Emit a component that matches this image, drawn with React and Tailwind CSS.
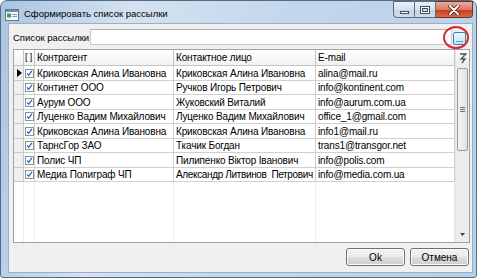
import React from "react";

const rows = [
  ["Криковская Алина Ивановна", "Криковская Алина Ивановна", "alina@mail.ru"],
  ["Континет ООО", "Ручков Игорь Петрович", "info@kontinent.com"],
  ["Аурум ООО", "Жуковский Виталий", "info@aurum.com.ua"],
  ["Луценко Вадим Михайлович", "Луценко Вадим Михайлович", "office_1@gmail.com"],
  ["Криковская Алина Ивановна", "Криковская Алина Ивановна", "info1@mail.ru"],
  ["ТарнсГор ЗАО", "Ткачик Богдан", "trans1@transgor.net"],
  ["Полис ЧП", "Пилипенко Віктор Іванович", "info@polis.com"],
  ["Медиа Полиграф ЧП", "Александр Литвинов  Петрович", "info@media.com.ua"],
];
const heights = ["h-[15px]", "h-[14px]"];

function Check() {
  return (
    <div className="w-[9px] h-[9px] bg-white border border-[#8e8f8f] flex items-center justify-center">
      <svg width="9" height="9" viewBox="0 0 9 9">
        <path d="M1.5 4.5 L3.5 6.8 L7.6 1.2" fill="none" stroke="#2a5bb8" strokeWidth="1.6" />
      </svg>
    </div>
  );
}

function Btn({ children }) {
  return (
    <div className="w-[59px] h-[18px] rounded-[3px] border border-[#707070] bg-[linear-gradient(#f2f2f2_0%,#ebebeb_50%,#dddddd_51%,#cfcfcf_100%)] flex items-center justify-center text-[10px] text-black shadow-[inset_0_0_0_1px_#fcfcfc]">
      {children}
    </div>
  );
}

export default function App() {
  return (
    <div className="w-[480px] h-[280px] bg-white relative overflow-hidden" style={{ fontFamily: '"Liberation Sans", Arial, sans-serif' }}>
      <div className="w-[477px] h-[278px] rounded-t-[7px] rounded-b-[3px] border border-[#566a80] bg-[linear-gradient(100deg,#a9c4e2_0%,#d4e2f1_25%,#c3d7ec_55%,#b8cfe8_100%)] flex flex-col">
        {/* title bar */}
        <div className="h-[22px] flex items-start">
          <div className="flex items-center h-[22px] pl-[4px] pt-[5px]">
            <svg width="14" height="12" viewBox="0 0 14 12">
              <rect x="0.5" y="0.5" width="13" height="11" fill="#f4f7fb" stroke="#5d7895" />
              <rect x="1" y="1" width="12" height="2" fill="#6d8fb7" />
              <rect x="2" y="4.5" width="4" height="4" fill="#3aa53a" />
              <rect x="7" y="5" width="5" height="1" fill="#8aa0b8" />
              <rect x="7" y="7" width="5" height="1" fill="#8aa0b8" />
            </svg>
            <span className="ml-[5px] text-[9.5px] text-black whitespace-nowrap">Сформировать список рассылки</span>
          </div>
          <div className="ml-auto flex mr-[3px]">
            <div className="w-[22px] h-[17px] rounded-bl-[4px] border border-[#5b6c80] bg-[linear-gradient(#e9f0f8_0%,#d6e2ef_50%,#c2d3e6_51%,#cfdcec_100%)] flex items-center justify-center">
              <div className="w-[9px] h-[3px] bg-white border border-[#404c5a] mt-[5px]"></div>
            </div>
            <div className="w-[21px] h-[17px] border-y border-r border-[#5b6c80] bg-[linear-gradient(#e9f0f8_0%,#d6e2ef_50%,#c2d3e6_51%,#cfdcec_100%)] flex items-center justify-center">
              <div className="w-[10px] h-[8px] border border-[#404c5a] bg-white flex items-center justify-center">
                <div className="w-[6px] h-[4px] border border-[#404c5a] bg-[#cfdcec]"></div>
              </div>
            </div>
            <div className="w-[37px] h-[17px] rounded-br-[4px] border-y border-r border-[#6b3328] bg-[linear-gradient(#ebab9c_0%,#d97a63_50%,#c33b1d_51%,#d86a4a_100%)] flex items-center justify-center">
              <svg width="12" height="10" viewBox="0 0 12 10">
                <path d="M2 1 L10 9 M10 1 L2 9" stroke="#3b1a14" strokeWidth="3.4" strokeLinecap="round" />
                <path d="M2 1 L10 9 M10 1 L2 9" stroke="#ffffff" strokeWidth="2" strokeLinecap="round" />
              </svg>
            </div>
          </div>
        </div>
        {/* client */}
        <div className="ml-[7px] mr-[3px] h-[250px] bg-[#f0f0f0] border border-[#9aaec4] relative pl-[4px] pr-[2px] flex flex-col">
          <div className="mt-[5px] h-[16px] flex items-center">
            <span className="w-[77px] text-[9.5px] leading-[16px] pt-[1px] text-black whitespace-nowrap">Список рассылки</span>
            <div className="flex-1 h-[16px] bg-white border border-[#c5ccd5] border-t-[#abadb3]"></div>
            <div className="ml-[1px] w-[13px] h-[13px] mt-[3px] mr-[4px] rounded-[2px] border border-[#3c7fb1] bg-[linear-gradient(#eaf6fd,#bee6fd)] flex items-end justify-center">
              <span className="text-[9px] leading-[9px] text-black">...</span>
            </div>
          </div>
          <div className="absolute left-[434px] top-[2px] w-[26px] h-[23px] rounded-[50%] border-2 border-[#d8282c]"></div>
          {/* grid */}
          <div className="mt-[4px] h-[194px] bg-white border border-[#a0a0a0] flex">
            <div className="w-[441px] flex flex-col">
              <div className="h-[16px] flex text-[10px] tracking-[-0.15px] text-black bg-[linear-gradient(#ffffff,#f0f0f0)]">
                <div className="w-[10px] border-r border-b border-[#c5c5c5]"></div>
                <div className="w-[11px] border-r border-b border-[#c5c5c5] text-[9px] leading-[15px] pl-[1px] whitespace-pre">[ ]</div>
                <div className="w-[139px] border-r border-b border-[#c5c5c5] leading-[15px] pl-[2px]">Контрагент</div>
                <div className="w-[142px] border-r border-b border-[#c5c5c5] leading-[15px] pl-[2px]">Контактное лицо</div>
                <div className="w-[139px] border-r border-b border-[#c5c5c5] leading-[15px] pl-[2px]">E-mail</div>
              </div>
              {rows.map((r, i) => (
                <div key={i} className={"flex text-[10px] tracking-[-0.15px] text-black " + heights[i % 2]}>
                  <div className="w-[10px] bg-[#f0f0f0] border-r border-b border-[#c8c8c8] flex items-center justify-end pr-[1px]">
                    {i === 0 && (
                      <svg width="5" height="8" viewBox="0 0 5 8"><path d="M0 0 L5 4 L0 8 Z" fill="#000" /></svg>
                    )}
                  </div>
                  <div className="w-[11px] border-r border-b border-[#d0d0d0] flex items-center pl-[1px]">
                    <Check />
                  </div>
                  <div className="w-[139px] border-r border-b border-[#d0d0d0] flex items-center pl-[2px] whitespace-pre overflow-hidden">{r[0]}</div>
                  <div className={"w-[142px] border-r border-b border-[#d0d0d0] flex items-center pl-[2px] whitespace-pre overflow-hidden " + (i === 7 ? "tracking-[-0.35px]" : "")}>{r[1]}</div>
                  <div className="w-[139px] border-r border-b border-[#d0d0d0] flex items-center pl-[2px] whitespace-pre overflow-hidden">{r[2]}</div>
                </div>
              ))}
              <div className="flex-1 flex">
                <div className="w-[10px] border-r border-[#ececec]"></div>
                <div className="w-[11px] border-r border-[#ececec]"></div>
                <div className="w-[139px] border-r border-[#ececec]"></div>
                <div className="w-[142px] border-r border-[#ececec]"></div>
                <div className="w-[139px] border-r border-[#ececec]"></div>
              </div>
            </div>
            <div className="w-[14px] bg-[#ececec] flex flex-col items-center border-l border-[#e4e4e4]">
              <div className="h-[16px] w-full bg-[linear-gradient(#ffffff,#ececec)] flex items-center justify-center">
                <svg width="8" height="11" viewBox="0 0 8 11">
                  <path d="M1 1 L7 1 L2 6 L6 6 L3 10" fill="none" stroke="#505050" strokeWidth="1.3" />
                  <path d="M4 2.5 L6.5 2.5" stroke="#909090" strokeWidth="1" />
                </svg>
              </div>
              <div className="mt-[2px] w-[11px] h-[83px] rounded-[2px] border border-[#9a9a9a] bg-[linear-gradient(90deg,#f4f4f4,#e2e2e2)] flex flex-col items-center justify-center gap-[1px]">
                <div className="w-[5px] h-[1px] bg-[#707070]"></div>
                <div className="w-[5px] h-[1px] bg-[#707070]"></div>
                <div className="w-[5px] h-[1px] bg-[#707070]"></div>
              </div>
              <div className="mt-auto mb-[6px]">
                <svg width="5" height="3" viewBox="0 0 5 3"><path d="M0 0 L5 0 L2.5 3 Z" fill="#404040" /></svg>
              </div>
            </div>
          </div>
          <div className="mt-[5px] flex justify-end gap-[5px] pr-[1px]">
            <Btn>Ok</Btn>
            <Btn>Отмена</Btn>
          </div>
        </div>
      </div>
    </div>
  );
}
